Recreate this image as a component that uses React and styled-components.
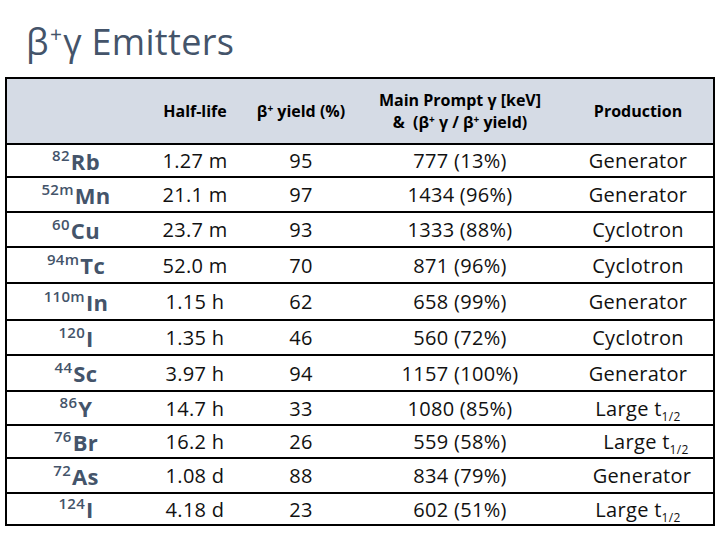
import React from "react";
import styled, { createGlobalStyle } from "styled-components";

const Global = createGlobalStyle`
  html, body { margin: 0; padding: 0; background: #ffffff; }
  body { font-family: "Open Sans", "DejaVu Sans", sans-serif; }
`;

const Page = styled.div`
  width: 720px;
  height: 540px;
  box-sizing: border-box;
  padding: 18px 0 0 5px;
  background: #fff;
`;

const Title = styled.h1`
  margin: 0 0 0 21px;
  height: 59px;
  font-family: "Open Sans", sans-serif;
  font-weight: 500;
  font-size: 36px;
  line-height: 47px;
  color: #44546a;
  letter-spacing: 0.3px;
  sup { font-size: 21px; vertical-align: 13px; line-height: 0; margin: 0 1px; }
`;

const Table = styled.div`
  width: 710px;
  box-sizing: border-box;
  border: 2px solid #000;
`;

const cols = "138px 100px 112px 206px 150px";

const HeaderRow = styled.div`
  display: grid;
  grid-template-columns: ${cols};
  height: 64px;
  background: #d5dbe5;
  align-items: center;
  font-weight: 700;
  font-size: 16px;
  line-height: 22px;
  color: #000;
  text-align: center;
  sup { font-size: 10px; vertical-align: 5px; line-height: 0; }
`;

const Row = styled.div`
  display: grid;
  grid-template-columns: ${cols};
  box-sizing: border-box;
  height: ${(p) => p.$h}px;
  border-top: 2px solid #000;
  align-items: center;
  text-align: center;
  font-size: 20px;
  letter-spacing: 0.3px;
  color: #111;
`;

const Cell = styled.div`
  white-space: nowrap;
  padding-left: ${(p) => p.$dx || 0}px;
  sub { font-size: 12px; vertical-align: -5px; line-height: 0; }
`;

const Nuclide = styled.div`
  white-space: nowrap;
  font-weight: 700;
  font-size: 22px;
  color: #44546a;
  sup { font-size: 15px; font-weight: 600; vertical-align: 9px; line-height: 0; margin-right: 1px; }
`;

const L = () => (
  <>
    Large t<sub>1/2</sub>
  </>
);

const rows = [
  ["82", "Rb", "1.27 m", "95", "777 (13%)", "Generator", 33],
  ["52m", "Mn", "21.1 m", "97", "1434 (96%)", "Generator", 35],
  ["60", "Cu", "23.7 m", "93", "1333 (88%)", "Cyclotron", 35],
  ["94m", "Tc", "52.0 m", "70", "871 (96%)", "Cyclotron", 36],
  ["110m", "In", "1.15 h", "62", "658 (99%)", "Generator", 37],
  ["120", "I", "1.35 h", "46", "560 (72%)", "Cyclotron", 35],
  ["44", "Sc", "3.97 h", "94", "1157 (100%)", "Generator", 36],
  ["86", "Y", "14.7 h", "33", "1080 (85%)", "L", 34, 0],
  ["76", "Br", "16.2 h", "26", "559 (58%)", "L", 33, 16],
  ["72", "As", "1.08 d", "88", "834 (79%)", "Generator", 35, 8],
  ["124", "I", "4.18 d", "23", "602 (51%)", "L", 32, 0],
];

export default function App() {
  return (
    <>
      <Global />
      <Page>
        <Title>
          β<sup>+</sup>γ Emitters
        </Title>
        <Table>
          <HeaderRow>
            <div />
            <div>Half-life</div>
            <div>
              β<sup>+</sup> yield (%)
            </div>
            <div>
              Main Prompt γ [keV]
              <br />
              &amp;&nbsp; (β<sup>+</sup> γ / β<sup>+</sup> yield)
            </div>
            <div>Production</div>
          </HeaderRow>
          {rows.map((r, i) => (
            <Row key={i} $h={r[6]}>
              <Nuclide>
                <sup>{r[0]}</sup>
                {r[1]}
              </Nuclide>
              <Cell>{r[2]}</Cell>
              <Cell>{r[3]}</Cell>
              <Cell>{r[4]}</Cell>
              <Cell $dx={r[7]}>{r[5] === "L" ? <L /> : r[5]}</Cell>
            </Row>
          ))}
        </Table>
      </Page>
    </>
  );
}
